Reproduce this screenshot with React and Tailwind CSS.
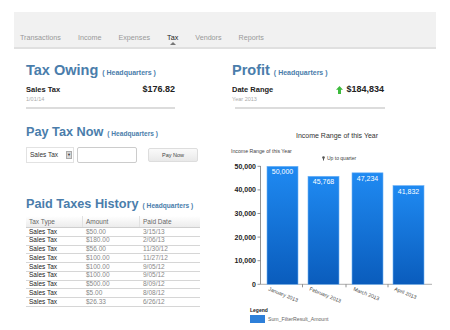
import React from "react";

const blue = "text-[#4a7dab]";

function Title({ children, small }) {
  return (
    <div className="flex items-baseline h-[18px] whitespace-nowrap">
      <span className={`${small ? "text-[12.7px]" : "text-[14.5px]"} leading-[18px] font-bold ${blue}`}>{children}</span>
      <span className={`ml-[4px] ${small ? "text-[6.6px]" : "text-[7px]"} font-bold ${blue}`}>( Headquarters )</span>
    </div>
  );
}

const rows = [
  ["$50.00", "3/15/13"],
  ["$180.00", "2/06/13"],
  ["$56.00", "11/30/12"],
  ["$100.00", "11/27/12"],
  ["$100.00", "9/05/12"],
  ["$100.00", "9/05/12"],
  ["$500.00", "8/09/12"],
  ["$5.00", "8/08/12"],
  ["$26.33", "6/26/12"],
];

function Chart() {
  const bars = [
    { x: 267, v: 50000, l: "50,000", m: "January 2013" },
    { x: 308, v: 45768, l: "45,768", m: "February 2013" },
    { x: 352, v: 47234, l: "47,234", m: "March 2013" },
    { x: 393, v: 41832, l: "41,832", m: "April 2013" },
  ];
  const base = 284.3;
  const scale = 118 / 50000;
  const ticks = [0, 10000, 20000, 30000, 40000, 50000];
  return (
    <svg width="225" height="205" viewBox="225 125 225 205" className="block -ml-[7px]" fontFamily="'Liberation Sans', Arial, sans-serif">
      <defs>
        <linearGradient id="bg" x1="0" y1="0" x2="0" y2="1">
          <stop offset="0" stopColor="#1f8af2" />
          <stop offset="1" stopColor="#0a5cbc" />
        </linearGradient>
      </defs>
      <text x="337" y="138" fontSize="7" fill="#333" textAnchor="middle">Income Range of this Year</text>
      <text x="231" y="153" fontSize="5.2" fill="#444">Income Range of this Year</text>
      <g>
        <circle cx="323.5" cy="157.5" r="1.3" fill="#555" />
        <rect x="323" y="158" width="1" height="2.5" fill="#555" />
        <text x="327" y="160" fontSize="5" fill="#444">Up to quarter</text>
      </g>
      {ticks.map((t) => {
        const y = base - t * scale;
        return (
          <g key={t}>
            <text x="256" y={y + 2.5} fontSize="7" fill="#222" fontWeight="bold" textAnchor="end">
              {t === 0 ? "0" : t.toLocaleString("en-US")}
            </text>
            <line x1="257.5" x2="260.5" y1={y} y2={y} stroke="#777" strokeWidth="0.8" />
          </g>
        );
      })}
      <line x1="260.5" x2="260.5" y1="166" y2={base} stroke="#777" strokeWidth="0.8" />
      <line x1="260.5" x2="432" y1={base} y2={base} stroke="#999" strokeWidth="0.8" />
      {[302.5, 346, 388].map((x) => (
        <line key={x} x1={x} x2={x} y1={base} y2={base + 3} stroke="#777" strokeWidth="0.8" />
      ))}
      {bars.map((b) => {
        const h = b.v * scale;
        const top = base - h;
        return (
          <g key={b.m}>
            <rect x={b.x} y={top} width="31" height={h} fill="url(#bg)" stroke="#6fb2f5" strokeWidth="0.6" />
            <text x={b.x + 15.5} y={top + 8} fontSize="7" fill="#fff" textAnchor="middle">{b.l}</text>
            <text x={b.x + 1} y={base + 6} fontSize="5.2" fill="#444" transform={`rotate(22 ${b.x + 1} ${base + 6})`}>{b.m}</text>
          </g>
        );
      })}
      <text x="250" y="312" fontSize="5" fill="#222" fontWeight="bold">Legend</text>
      <rect x="250" y="315" width="15" height="8" fill="#2d7fd9" />
      <text x="268" y="321" fontSize="5.2" fill="#666">Sum_FilterResult_Amount</text>
    </svg>
  );
}

export default function App() {
  const tabs = ["Transactions", "Income", "Expenses", "Tax", "Vendors", "Reports"];
  return (
    <div className="w-[450px] h-[330px] bg-white overflow-hidden font-['Liberation_Sans',Arial,sans-serif]">
      <div className="pt-[12px] px-[14px]">
        <nav className="h-[37px] bg-[#f1f1f1] border-b-2 border-[#e0e0e0] flex items-end gap-[17px] pl-[6px] pb-[5px] text-[7.2px] leading-[9px]">
          {tabs.map((t) => (
            <span key={t} className={t === "Tax" ? "relative text-[#222]" : "text-[#999]"}>
              {t}
              {t === "Tax" && (
                <span className="absolute left-1/2 -translate-x-1/2 top-[9px] w-0 h-0 border-l-[3px] border-r-[3px] border-b-[3px] border-l-transparent border-r-transparent border-b-[#777]" />
              )}
            </span>
          ))}
        </nav>
      </div>
      <div className="flex pl-[26px] pt-[12px]">
        <div className="w-[175px]">
          <Title>Tax Owing</Title>
          <div className="mt-[6px] w-[149px] flex justify-between items-center h-[10px]">
            <span className="text-[7.5px] font-bold text-[#222]">Sales Tax</span>
            <span className="text-[9px] font-bold text-[#222]">$176.82</span>
          </div>
          <div className="text-[5.5px] leading-[8px] text-[#aaa]">1/01/14</div>
          <div className="mt-[4px] h-[2px] w-[149px] bg-[#dcdcdc]" />

          <div className="mt-[14px]">
            <Title small>Pay Tax Now</Title>
          </div>
          <div className="mt-[6px] flex items-center h-[16px]">
            <div className="w-[48px] h-[16px] border border-[#e2e2e2] flex items-center justify-between pl-[3px] pr-[1px]">
              <span className="text-[6.5px] text-[#333]">Sales Tax</span>
              <span className="w-[6px] h-[8px] bg-[#d8d8d8] border border-[#aaa] flex items-center justify-center text-[4px] leading-none text-[#333]">▼</span>
            </div>
            <div className="ml-[3px] w-[60px] h-[16px] border border-[#ccc] rounded-[2px] bg-white" />
            <div className="ml-[11px] w-[50px] h-[14px] border border-[#ddd] rounded-[2px] bg-gradient-to-b from-[#fafafa] to-[#e9e9e9] flex items-center justify-center text-[5.5px] text-[#444]">
              Pay Now
            </div>
          </div>

          <div className="mt-[32px]">
            <Title small>Paid Taxes History</Title>
          </div>
          <div className="mt-[3px] w-[174px] text-[6.5px]">
            <div className="h-[12px] flex items-center bg-gradient-to-b from-[#ffffff] to-[#ececec] border-b border-[#cfcfcf] text-[#666]">
              <div className="w-[57px] pl-[3px] h-full flex items-center border-r border-[#e2e2e2]">Tax Type</div>
              <div className="w-[57px] pl-[3px] h-full flex items-center border-r border-[#e2e2e2]">Amount</div>
              <div className="flex-1 pl-[3px]">Paid Date</div>
            </div>
            {rows.map((r, i) => (
              <div key={i} className="h-[8.75px] flex items-center border-b border-[#d6d6d6] leading-none">
                <div className="w-[57px] pl-[3px] text-[#222]">Sales Tax</div>
                <div className="w-[57px] pl-[3px] text-[#888]">{r[0]}</div>
                <div className="flex-1 pl-[3px] text-[#888]">{r[1]}</div>
              </div>
            ))}
          </div>
        </div>

        <div className="ml-[31px] w-[212px]">
          <Title>Profit</Title>
          <div className="mt-[6px] w-[152px] flex justify-between items-center h-[10px]">
            <span className="text-[7.5px] font-bold text-[#222]">Date Range</span>
            <span className="flex items-center">
              <svg width="7" height="8" viewBox="0 0 7 8" className="mr-[3px]">
                <path d="M3.5 0 L7 3.8 L5 3.8 L5 8 L2 8 L2 3.8 L0 3.8 Z" fill="#3dbb3d" />
              </svg>
              <span className="text-[9px] font-bold text-[#222]">$184,834</span>
            </span>
          </div>
          <div className="text-[5.5px] leading-[8px] text-[#aaa]">Year 2013</div>
          <div className="mt-[4px] ml-[3px] h-[2px] w-[150px] bg-[#dcdcdc]" />
          <div className="mt-[16px]">
            <Chart />
          </div>
        </div>
      </div>
    </div>
  );
}
